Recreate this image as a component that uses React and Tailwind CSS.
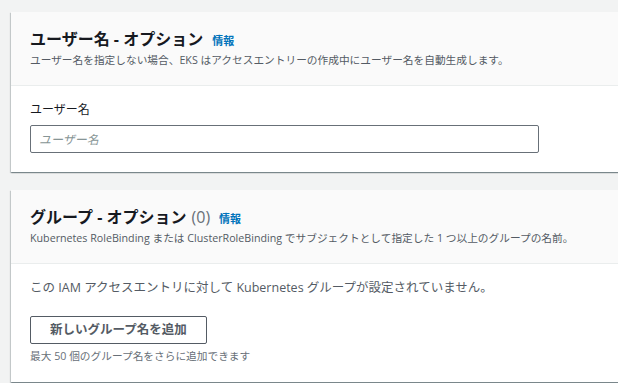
import React from 'react';

const font = { fontFamily: '"Open Sans", "Noto Sans CJK JP", sans-serif' };

function InfoLink() {
  return <a className="ml-[9px] text-[11px] font-bold text-[#0073bb]">情報</a>;
}

function Card({ title, count, description, children }) {
  return (
    <div className="w-[640px] bg-white shadow-[0_1px_1px_0_rgba(0,28,36,0.3),1px_1px_1px_0_rgba(0,28,36,0.15),-1px_1px_1px_0_rgba(0,28,36,0.15)]">
      <div className="border-b border-[#eaeded] bg-[#fafafa] px-[19px] pt-[16px] pb-[17px]">
        <div className="flex items-baseline">
          <h2 className="text-[16px] leading-[22px] font-bold text-[#16191f]">
            {title}
            {count !== undefined && <span className="ml-[5px] font-normal text-[#687078]">({count})</span>}
          </h2>
          <InfoLink />
        </div>
        <p className="mt-[2px] text-[10.7px] leading-[16px] text-[#545b64]">{description}</p>
      </div>
      {children}
    </div>
  );
}

export default function App() {
  return (
    <div className="min-h-[383px] overflow-hidden bg-[#f2f3f3] pt-[12px] pl-[11px]" style={font}>
      <Card
        title="ユーザー名 - オプション"
        description="ユーザー名を指定しない場合、EKS はアクセスエントリーの作成中にユーザー名を自動生成します。"
      >
        <div className="px-[19px] pt-[16px] pb-[19px]">
          <label className="block text-[12px] leading-[16px] text-[#16191f]">ユーザー名</label>
          <input
            placeholder="ユーザー名"
            className="mt-[7px] block h-[28px] w-[509px] rounded-[2px] border border-[#687078] px-[8px] text-[12px] text-[#16191f] placeholder:italic placeholder:text-[#879596] outline-none"
          />
        </div>
      </Card>

      <div className="h-[18px]" />

      <Card
        title="グループ - オプション"
        count={0}
        description="Kubernetes RoleBinding または ClusterRoleBinding でサブジェクトとして指定した 1 つ以上のグループの名前。"
      >
        <div className="px-[19px] pt-[15px] pb-[18px]">
          <p className="text-[12.5px] leading-[18px] text-[#545b64]">
            この IAM アクセスエントリに対して Kubernetes グループが設定されていません。
          </p>
          <button className="mt-[19px] flex h-[28px] w-[177px] items-center justify-center rounded-[2px] border border-[#545b64] bg-white text-[12.5px] font-bold text-[#545b64]">
            新しいグループ名を追加
          </button>
          <p className="mt-[4px] text-[10.7px] leading-[16px] text-[#687078]">最大 50 個のグループ名をさらに追加できます</p>
        </div>
      </Card>
    </div>
  );
}
